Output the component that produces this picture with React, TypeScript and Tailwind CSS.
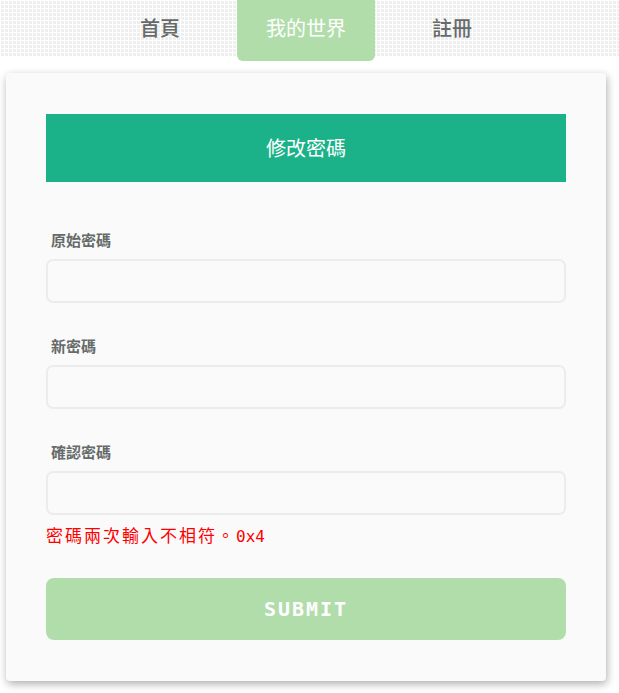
import React, { useState } from 'react';

const cjk = "font-['Noto_Sans_CJK_TC','Noto_Sans_CJK_SC',sans-serif]";

const tabs = ['首頁', '我的世界', '註冊'];

const Field: React.FC<{ label: string }> = ({ label }) => (
  <div className="flex flex-col">
    <label className={`${cjk} pl-[5px] text-[15px] font-bold leading-[20px] text-[#666b69] mb-[9px]`}>{label}</label>
    <input
      type="password"
      className="h-[44px] w-full rounded-[7px] border-2 border-[#ececec] bg-[#fafafa] px-3 outline-none"
    />
  </div>
);

const App: React.FC = () => {
  const [active] = useState(1);

  return (
    <div className="min-h-screen w-[619px] bg-white">
      {/* top nav with dotted pattern */}
      <div className="h-[57px] w-full bg-[#efefef] bg-[linear-gradient(#ffffff_1px,transparent_1px),linear-gradient(90deg,#ffffff_1px,transparent_1px)] bg-[size:4px_4px]">
        <nav className="flex w-[612px] justify-center gap-[8px]">
          {tabs.map((t, i) => (
            <div
              key={t}
              className={`${cjk} flex h-[61px] w-[138px] items-center justify-center rounded-b-[6px] pb-[6px] text-[20px] ${
                i === active ? 'bg-[#b1ddab] text-white' : 'text-[#666b69] font-medium'
              }`}
            >
              {t}
            </div>
          ))}
        </nav>
      </div>

      <div className="w-[612px] px-[6px] pt-[16px] pb-[12px]">
        <div className="rounded-[4px] bg-[#fafafa] px-[40px] pt-[41px] pb-[41px] shadow-[1px_3px_8px_rgba(0,0,0,0.32)]">
          <div className={`${cjk} flex h-[68px] items-center justify-center bg-[#1bb28a] text-[20px] text-white`}>
            修改密碼
          </div>

          <div className="mt-[48px] flex flex-col gap-[33px]">
            <Field label="原始密碼" />
            <Field label="新密碼" />
            <Field label="確認密碼" />
          </div>

          <p className="mt-[8px] flex items-baseline leading-[24px] text-[#ff0000]">
            <span className={`${cjk} text-[17px] tracking-[2px]`}>密碼兩次輸入不相符。</span>
            <span className="font-['DejaVu_Sans_Mono',monospace] text-[16px]">0x4</span>
          </p>

          <button
            type="button"
            className="mt-[29px] flex h-[62px] w-full items-center justify-center rounded-[8px] bg-[#b1ddab] font-['DejaVu_Sans_Mono',monospace] text-[20px] font-bold tracking-[2px] text-white"
          >
            SUBMIT
          </button>
        </div>
      </div>
    </div>
  );
};

export default App;
